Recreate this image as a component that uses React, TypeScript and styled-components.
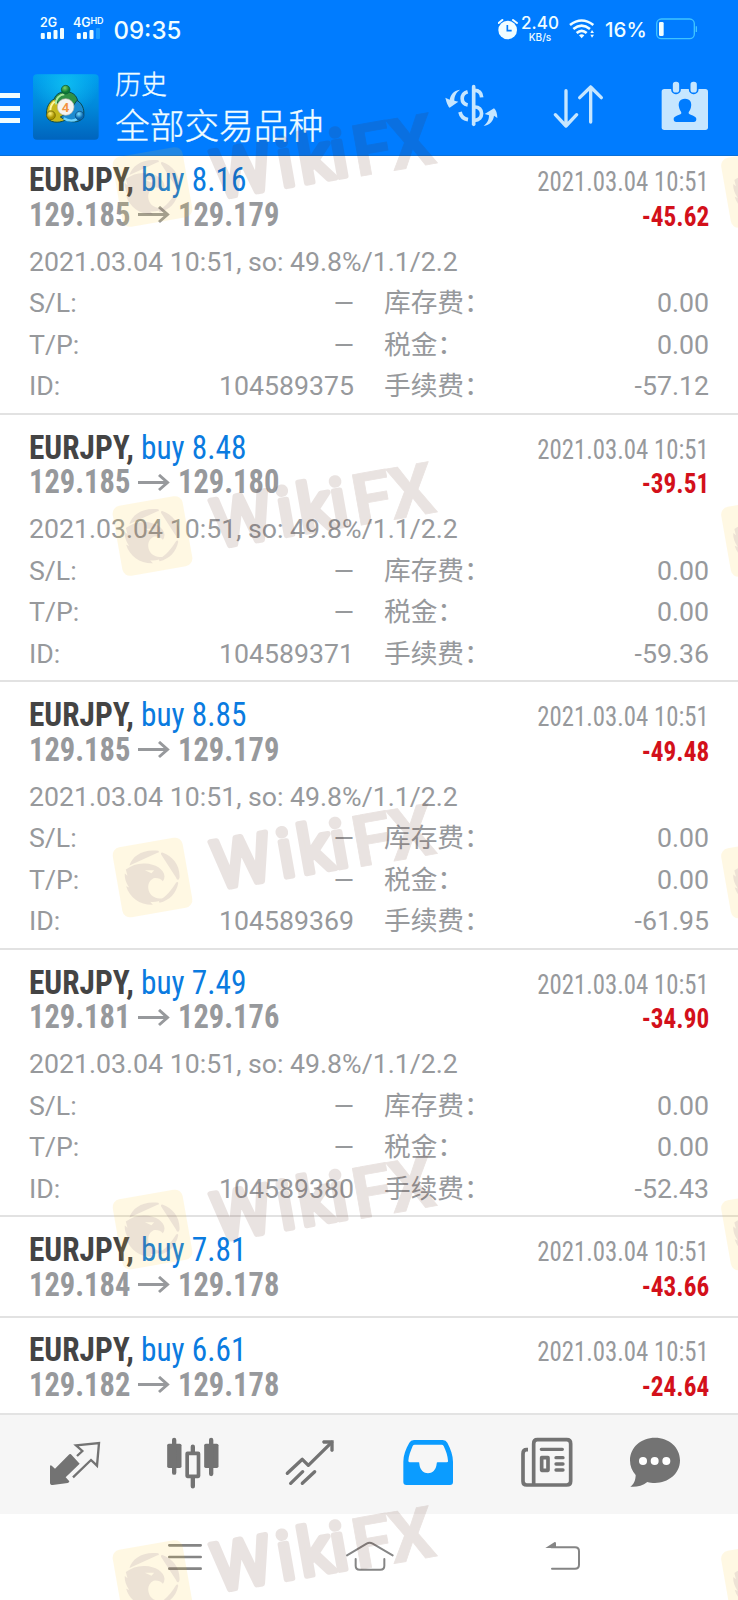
import React from "react";
import styled, { createGlobalStyle } from "styled-components";

const GlobalStyle = createGlobalStyle`
  * { box-sizing: border-box; }
  body { margin: 0; background: #fff; font-family: Roboto, "Noto Sans CJK SC", sans-serif; }
  svg { display: block; flex: none; }
`;

const Screen = styled.div`
  position: relative;
  width: 738px;
  height: 1600px;
  overflow: hidden;
  display: flex;
  flex-direction: column;
  background: #fff;
`;

const Header = styled.header`
  flex: none;
  height: 156px;
  background: #007cff;
  border-bottom: 1px solid #0a70d8;
  color: #f0fdff;
`;

const StatusBar = styled.div`
  height: 58px;
  padding: 0 40px 0 40px;
  display: flex;
  justify-content: space-between;
  font-family: Inter, sans-serif;
`;

const StatusGroup = styled.div`
  display: flex;
  align-items: flex-start;
`;

const Signal = styled.div<{ $width: number }>`
  width: ${(p) => p.$width}px;
  padding-top: 18px;
  font-size: 12.5px;
  line-height: 10px;
  font-weight: 600;
  letter-spacing: -0.1px;
  white-space: nowrap;
`;

const Hd = styled.span`
  font-size: 9px;
  vertical-align: 3px;
  line-height: 1px;
`;

const Clock = styled.div`
  padding-top: 15px;
  font-size: 24px;
  line-height: 31px;
  font-weight: 500;
`;

const Speed = styled.div`
  width: 38px;
  margin: 15px 10px 0 3.5px;
  text-align: center;
  font-size: 17px;
  line-height: 17px;
  font-weight: 500;
  small {
    display: block;
    font-size: 10px;
    line-height: 10px;
  }
`;

const Percent = styled.div`
  margin: 15px 8px 0 10px;
  width: 43px;
  font-size: 20.5px;
  line-height: 29px;
  font-weight: 500;
`;

const TitleBar = styled.div`
  height: 97px;
  display: flex;
  align-items: flex-start;
`;

const MenuLines = styled.div`
  width: 20px;
  height: 30px;
  margin: 35px 12.5px 0 0;
  display: flex;
  flex-direction: column;
  justify-content: space-between;
  span { height: 5px; background: #f0fdff; }
`;

const Titles = styled.div`
  width: 325px;
  margin-left: 16.5px;
  padding-top: 8px;
  font-family: "Noto Sans CJK SC", sans-serif;
  font-weight: 300;
  -webkit-text-stroke: 0.35px #f0fdff;
  white-space: nowrap;
`;

const Subtitle = styled.div`
  font-size: 26px;
  line-height: 34px;
`;

const Title = styled.div`
  font-size: 34.7px;
  line-height: 48px;
`;

const Actions = styled.div`
  display: grid;
  grid-template-columns: 108px 107px 60px;
  padding-top: 22px;
`;

const List = styled.main`
  flex: none;
  height: 1257px;
  overflow: hidden;
`;

const Scroller = styled.div`
  margin-top: -8.6px;
`;

const Deal = styled.article<{ $open: boolean }>`
  height: ${(p) => (p.$open ? 267.5 : 100.4)}px;
  padding: 15.6px 29px 0;
  border-bottom: 2px solid #e2e2e2;
`;

const Line = styled.div`
  display: flex;
  justify-content: space-between;
  align-items: baseline;
  height: 34.7px;
  line-height: 34.7px;
  white-space: nowrap;
  font-family: "Roboto Condensed", Roboto, sans-serif;
  font-stretch: 75%;
`;

const Instrument = styled.div`
  font-size: 32.5px;
  font-weight: 700;
  color: #444;
  transform: scaleX(0.963);
  transform-origin: left;
  span { font-weight: 400; color: #0a7be0; }
`;

const Prices = styled.div`
  display: flex;
  align-items: baseline;
  font-size: 32.5px;
  font-weight: 700;
  color: #97999c;
  svg { margin: 0 8px 0 7px; align-self: center; }
`;

const Price = styled.span`
  width: 101px;
  transform: scaleX(0.938);
  transform-origin: left;
`;

const Stamp = styled.div`
  font-size: 27px;
  color: #97999c;
  transform: scaleX(0.918);
  transform-origin: right;
`;

const Profit = styled.div`
  font-size: 27px;
  font-weight: 700;
  color: #d3101a;
  transform: scaleX(0.935);
  transform-origin: right;
`;

const Details = styled.div`
  margin-top: 9.4px;
  font-size: 26.7px;
  line-height: 41.5px;
  color: #97999c;
  white-space: nowrap;
`;

const Grid = styled.div`
  display: grid;
  grid-template-columns: 120px 205px 30px 150px 175px;
  grid-auto-rows: 41.5px;
`;

const Value = styled.div<{ $last?: boolean }>`
  text-align: right;
  grid-column: ${(p) => (p.$last ? 5 : 2)};
`;

const Dash = styled.span`
  display: inline-block;
  margin-right: -1.5px;
  transform: scaleX(1.3);
  transform-origin: right;
`;

const Fee = styled.div`
  grid-column: 4;
`;

const Tabs = styled.nav`
  flex: none;
  height: 101px;
  padding: 20px 0 0 47px;
  border-top: 2px solid #e3e3e3;
  background: #f6f6f6;
  display: grid;
  grid-template-columns: 117.5px 117.5px 118px 119px 108px 56px;
`;

const SystemNav = styled.nav`
  flex: 1;
  padding: 23px 0 0 155px;
  display: grid;
  grid-template-columns: 185px 193px 60px;
`;

const Overlay = styled.svg`
  position: absolute;
  inset: 0;
  pointer-events: none;
`;

type DealData = {
  lot: string;
  open: string;
  close: string;
  profit: string;
  id?: string;
  fee?: string;
};

const deals: DealData[] = [
  { lot: "8.16", open: "129.185", close: "129.179", profit: "-45.62", id: "104589375", fee: "-57.12" },
  { lot: "8.48", open: "129.185", close: "129.180", profit: "-39.51", id: "104589371", fee: "-59.36" },
  { lot: "8.85", open: "129.185", close: "129.179", profit: "-49.48", id: "104589369", fee: "-61.95" },
  { lot: "7.49", open: "129.181", close: "129.176", profit: "-34.90", id: "104589380", fee: "-52.43" },
  { lot: "7.81", open: "129.184", close: "129.178", profit: "-43.66" },
  { lot: "6.61", open: "129.182", close: "129.178", profit: "-24.64" },
];

const Bars = ({ dim }: { dim?: boolean }) => (
  <svg width="27" height="11" viewBox={dim ? "-3 0 27 11" : "0 0 27 11"} fill="#f0fdff">
    <rect x="0.8" y="5" width="4" height="6" rx="1" />
    <rect x="7" y="4" width="4" height="7" rx="1" />
    <rect x="13.5" y="2" width="4" height="9" rx="1" />
    <rect x="20" y="0" width="4" height="11" rx="1" fill={dim ? "#1c9bff" : "#f0fdff"} />
  </svg>
);

const AlarmIcon = () => (
  <svg width="20" height="21" viewBox="386 57 60 63" style={{ marginTop: 19 }}>
    <circle cx="415" cy="90" r="28" fill="#f0fdff" />
    <path d="M388 69 L399 60 M431 60 L443 69" stroke="#f0fdff" strokeWidth="6" strokeLinecap="round" />
    <path d="M414 75 V92 H427" fill="none" stroke="#007cff" strokeWidth="5" />
  </svg>
);

const WifiIcon = () => (
  <svg width="26" height="21" viewBox="603 57 78 63" style={{ marginTop: 19 }} fill="none" stroke="#f0fdff" strokeWidth="8">
    <path d="M606 75 Q641 48 676 75" />
    <path d="M616 87 Q641 67 666 87" />
    <path d="M626 99 Q641 86 656 99" />
    <path d="M633 106 Q641 99 649 106 L641 115 Z" fill="#f0fdff" stroke="none" />
    <path d="M667 99 L672 90 L678 99 Z M667 104 L672 113 L678 104 Z" fill="#f0fdff" stroke="none" />
  </svg>
);

const BatteryIcon = () => (
  <svg width="42" height="22" viewBox="864 54 126 66" style={{ marginTop: 18 }}>
    <rect x="866" y="57" width="113" height="59" rx="14" fill="none" stroke="#3fc3ff" strokeWidth="4" />
    <rect x="873" y="66" width="14" height="42" rx="4" fill="#f0fdff" />
    <path d="M985 79 V96" stroke="#3fc3ff" strokeWidth="4" />
  </svg>
);

const AppIcon = () => (
  <svg width="66" height="66" viewBox="98 221 198 198" style={{ marginTop: 15.7 }}>
    <defs>
      <linearGradient id="tile" x1="0" y1="0" x2="0" y2="1">
        <stop offset="0" stopColor="#009fee" />
        <stop offset="0.5" stopColor="#0088da" />
        <stop offset="1" stopColor="#0064bd" />
      </linearGradient>
      <radialGradient id="glow" cx="0.5" cy="0.15" r="0.5">
        <stop offset="0" stopColor="#10c4f4" stopOpacity="0.8" />
        <stop offset="1" stopColor="#10c4f4" stopOpacity="0" />
      </radialGradient>
      <radialGradient id="green" cx="0.4" cy="0.3"><stop offset="0" stopColor="#7ed36a" /><stop offset="1" stopColor="#0c7a35" /></radialGradient>
      <radialGradient id="yellow" cx="0.4" cy="0.3"><stop offset="0" stopColor="#fff07a" /><stop offset="1" stopColor="#a99400" /></radialGradient>
      <radialGradient id="blue" cx="0.4" cy="0.3"><stop offset="0" stopColor="#7fe0ff" /><stop offset="1" stopColor="#0868b0" /></radialGradient>
    </defs>
    <rect x="98" y="222" width="197" height="196" rx="12" fill="url(#tile)" />
    <rect x="98" y="222" width="197" height="196" rx="12" fill="url(#glow)" />
    <g stroke="#0a4a50" strokeWidth="3">
      <path d="M160 320 C155 290 172 274 196 274 C222 274 236 292 232 318 L214 330 H178 Z" fill="#2f9146" />
      <path d="M164 295 C140 305 134 335 142 355 C155 370 185 368 200 356 L186 330 Z" fill="#c6b81c" />
      <path d="M230 300 C250 312 254 335 248 352 C236 370 205 368 180 350 L205 335 Z" fill="#1c8bd0" />
    </g>
    <path d="M167 312 C165 294 178 283 192 282" fill="none" stroke="#a9e89c" strokeWidth="6" />
    <path d="M150 330 C150 318 155 310 163 304" fill="none" stroke="#fff59a" strokeWidth="6" />
    <path d="M190 354 C205 364 222 362 230 356" fill="none" stroke="#6fd4ff" strokeWidth="7" />
    <circle cx="196" cy="268" r="13" fill="url(#green)" stroke="#0b5433" strokeWidth="2" />
    <circle cx="152" cy="345" r="13" fill="url(#yellow)" stroke="#655a00" strokeWidth="2" />
    <circle cx="238" cy="346" r="13" fill="url(#blue)" stroke="#07477a" strokeWidth="2" />
    <circle cx="196" cy="320" r="25" fill="#f6f4f0" stroke="#b8b4aa" strokeWidth="2" />
    <text x="196" y="334" textAnchor="middle" fontFamily="Roboto, sans-serif" fontSize="40" fontWeight="600" fill="#f39140">4</text>
  </svg>
);

const tint = "#c6e6ff";

const CurrencyIcon = () => (
  <svg width="64" height="54" viewBox="216 240 192 162" fill="none" stroke={tint} strokeWidth="11">
    <path d="M317 260 V373" strokeLinecap="round" />
    <path d="M299 275 C277 281 277 311 299 315" />
    <path d="M276 336 C279 350 288 357 300 359" />
    <path d="M319 271 C332 271 340 278 341 292" />
    <path d="M319 321 C348 319 348 362 319 361" />
    <path d="M232 293 L245 299 C248 284 256 272 276 269 C264 278 259 288 259 302 L271 305 L245 323 Q238 318 232 293 Z" fill={tint} stroke="none" />
    <path d="M388 354 L378 347 C376 363 366 375 347 378 C359 369 363 359 363 346 L350 342 L378 325 Q387 332 388 354 Z" fill={tint} stroke="none" />
  </svg>
);

const SortIcon = () => (
  <svg width="60" height="54" viewBox="540 240 180 162" fill="none" stroke={tint} strokeWidth="10" strokeLinecap="round" strokeLinejoin="round">
    <path d="M594 272 V378 M562 344 L594 378 L626 344" />
    <path d="M668 366 V261 M635 293 L668 261 L700 293" />
  </svg>
);

const CalendarIcon = () => (
  <svg width="60" height="54" viewBox="861 240 180 162">
    <rect x="881" y="267" width="139" height="123" rx="8" fill={tint} />
    <g fill={tint} stroke="#007cff" strokeWidth="5">
      <rect x="912" y="243" width="24" height="37" rx="11" />
      <rect x="965" y="243" width="24" height="37" rx="11" />
    </g>
    <path d="M951 296 C967 296 972 308 969 321 C967 332 961 335 962 340 C964 346 985 347 985 357 Q985 366 977 366 H925 Q917 366 917 357 C917 347 938 346 940 340 C941 335 935 332 933 321 C930 308 935 296 951 296 Z" fill="#007cff" />
  </svg>
);

const PriceArrow = () => (
  <svg width="33" height="18" viewBox="0 0 33 18" fill="none" stroke="#97999c" strokeWidth="3">
    <path d="M1 8.5 H31 M22 1 L30.5 8.5 L22 16" />
  </svg>
);

const gray = "#737373";

const TabBar = () => (
  <Tabs>
    <svg width="56" height="54" viewBox="141 90 168 162">
      <path d="M208 148 Q212 146 215 150 L239 176 L197 217 L208 229 Q208 233 203 234 L158 240 Q150 240 150 233 V184 Q151 178 156 183 L165 191 Z" fill={gray} />
      <path d="M231 153 L247 138 L228 121 L297 114 L291 182 L273 165 L219 217" fill="none" stroke={gray} strokeWidth="7" />
    </svg>
    <svg width="56" height="54" viewBox="493.5 90 168 162" fill={gray}>
      <rect x="500" y="116" width="43" height="73" rx="5" />
      <rect x="611" y="116" width="43" height="73" rx="5" />
      <path d="M521 105 V203 M632 105 V207 M577 125 V145 M577 215 V244" stroke={gray} strokeWidth="13" strokeLinecap="round" />
      <rect x="560" y="145" width="34" height="69" rx="1" fill="#f6f6f6" stroke={gray} strokeWidth="11" />
    </svg>
    <svg width="56" height="54" viewBox="846 90 168 162" fill="none" stroke={gray} strokeWidth="10" strokeLinecap="round" strokeLinejoin="round">
      <path d="M862 205 L907 163 L925 181 L995 112" />
      <path d="M872 235 L908 200 M907 235 L944 200" />
      <path d="M970 106 H1001 V137 Q996 144 991 137 V116 H970 Q963 111 970 106 Z" fill={gray} stroke="none" />
    </svg>
    <svg width="56" height="54" viewBox="96 90 168 162">
      <path fillRule="evenodd" fill="#0b9cff" d="M138 105 H224 Q234 105 238 113 C248 133 255 150 255 170 V231 Q255 240 246 240 H115 Q106 240 106 231 V170 C106 150 113 133 124 113 Q128 105 138 105 Z M140 119 Q136 119 134 123 C128 138 122 152 121 167 Q121 172 126 172 H152 Q154 172 154 176 C157 214 203 214 206 176 Q206 172 209 172 H236 Q241 172 240 167 C239 152 234 138 227 123 Q225 119 221 119 Z" />
    </svg>
    <svg width="56" height="54" viewBox="453 90 168 162" fill="none" stroke={gray}>
      <path strokeWidth="11" d="M480 134 H476 Q465 134 465 146 V229 Q465 240 476 240 H596 Q608 240 608 229 V116 Q608 104 596 104 H508 Q497 104 497 116 V239" />
      <path strokeWidth="10" strokeLinecap="round" d="M520 133 H583 M564 158 H585 M564 177 H585 M564 195 H585" />
      <rect x="521" y="158" width="19" height="38" strokeWidth="11" strokeLinejoin="round" />
    </svg>
    <svg width="56" height="54" viewBox="777 90 168 162">
      <path d="M861 98 C903 98 936 127 936 166 C936 207 900 234 861 234 C852 234 845 233 838 231 C823 243 803 247 787 245 C798 238 803 225 803 210 C792 198 786 184 786 166 C786 127 819 98 861 98 Z" fill={gray} />
      <g fill="#fff"><circle cx="825" cy="168" r="12" /><circle cx="860" cy="168" r="12" /><circle cx="895" cy="168" r="12" /></g>
    </svg>
  </Tabs>
);

const BottomNav = () => (
  <SystemNav>
    <svg width="60" height="40" viewBox="465 396 180 120" stroke="#858585" strokeWidth="8" strokeLinecap="round">
      <path d="M508 421 H602 M508 456 H602 M508 491 H602" />
    </svg>
    <svg width="60" height="40" viewBox="1020 396 180 120" fill="none" stroke="#858585" strokeWidth="6" strokeLinecap="round" strokeLinejoin="round">
      <path d="M1041 451 L1100 416 Q1109 411 1118 416 L1178 451" />
      <path d="M1067 462 V482 Q1067 494 1079 494 H1141 Q1153 494 1153 482 V462" />
    </svg>
    <svg width="60" height="40" viewBox="495 396 180 120" fill="none" stroke="#858585" strokeWidth="6" strokeLinecap="round">
      <path d="M550 427 H621 Q633 427 633 439 V479 Q633 491 621 491 H552" />
      <path d="M532 429 L560 411 Q564 411 564 415 V429 Z" fill="#858585" stroke="none" />
    </svg>
  </SystemNav>
);

const Badge = ({ x, y }: { x: number; y: number }) => (
  <g transform={`translate(${x} ${y})`}>
    <rect x="-35.5" y="-35.5" width="71" height="71" rx="8" transform="rotate(-10)" fill="#ffc928" opacity="0.13" />
    <g transform="scale(0.3333) translate(-187 -262)" fill="#502860" opacity="0.1">
      <path d="M118 226 C126 198 158 176 204 182 C208 184 206 187 202 188 Z" />
      <path d="M216 187 C248 198 270 226 268 262 C266 272 260 270 258 263 L213 193 Q211 187 216 187 Z" />
      <path d="M264 280 C258 310 238 330 208 338 L206 332 C228 320 244 300 258 277 Q264 273 264 280 Z" />
      <path d="M107 238 C125 226 142 219 164 220 C196 221 221 237 223 258 Q223 267 218 273 C211 265 202 262 190 264 C174 272 170 290 178 307 C186 321 200 327 221 325 C206 334 194 337 180 335 L188 344 C150 345 118 322 108 288 L117 292 C105 274 103 260 104 250 L112 257 Z M164 240 L184 249 L192 240 Z" fillRule="evenodd" />
    </g>
  </g>
);

const Watermarks = () => (
  <Overlay width="738" height="1600" viewBox="0 0 738 1600">
    {[187, 536, 877.5, 1229.5, 1580].map((y) => (
      <g key={y}>
        <Badge x={152.5} y={y} />
        <Badge x={761} y={y + 1} />
        <g transform={`translate(215.5 ${y + 12}) rotate(-10)`} opacity="0.12">
          <text
            x="1 67 88 121 143 180"
            y="0"
            fontFamily="Roboto, sans-serif"
            fontSize="67"
            fontWeight="400"
            fill="#56200f"
            stroke="#56200f"
            strokeWidth="5.5"
            strokeLinejoin="round"
          >
            Wiki<tspan dy="3" fontSize="72" fontWeight="700" strokeWidth="0.8">FX</tspan>
          </text>
        </g>
      </g>
    ))}
  </Overlay>
);

const DealRow = ({ deal }: { deal: DealData }) => (
  <Deal $open={!!deal.id}>
    <Line>
      <Instrument>EURJPY, <span>buy {deal.lot}</span></Instrument>
      <Stamp>2021.03.04 10:51</Stamp>
    </Line>
    <Line>
      <Prices><Price>{deal.open}</Price><PriceArrow /><Price>{deal.close}</Price></Prices>
      <Profit>{deal.profit}</Profit>
    </Line>
    {deal.id && (
      <Details>
        2021.03.04 10:51, so: 49.8%/1.1/2.2
        <Grid>
          <div>S/L:</div><Value><Dash>–</Dash></Value><Fee>库存费：</Fee><Value $last>0.00</Value>
          <div>T/P:</div><Value><Dash>–</Dash></Value><Fee>税金：</Fee><Value $last>0.00</Value>
          <div>ID:</div><Value>{deal.id}</Value><Fee>手续费：</Fee><Value $last>{deal.fee}</Value>
        </Grid>
      </Details>
    )}
  </Deal>
);

export default function App() {
  return (
    <Screen>
      <GlobalStyle />
      <Header>
        <StatusBar>
          <StatusGroup>
            <Signal $width={33}>2G<Bars /></Signal>
            <Signal $width={40.5}>4G<Hd>HD</Hd><Bars dim /></Signal>
            <Clock>09:35</Clock>
          </StatusGroup>
          <StatusGroup>
            <AlarmIcon />
            <Speed>2.40<small>KB/s</small></Speed>
            <WifiIcon />
            <Percent>16%</Percent>
            <BatteryIcon />
          </StatusGroup>
        </StatusBar>
        <TitleBar>
          <MenuLines><span /><span /><span /></MenuLines>
          <AppIcon />
          <Titles>
            <Subtitle>历史</Subtitle>
            <Title>全部交易品种</Title>
          </Titles>
          <Actions>
            <CurrencyIcon />
            <SortIcon />
            <CalendarIcon />
          </Actions>
        </TitleBar>
      </Header>
      <List>
        <Scroller>
          {deals.map((deal) => <DealRow key={deal.profit} deal={deal} />)}
        </Scroller>
      </List>
      <TabBar />
      <BottomNav />
      <Watermarks />
    </Screen>
  );
}
